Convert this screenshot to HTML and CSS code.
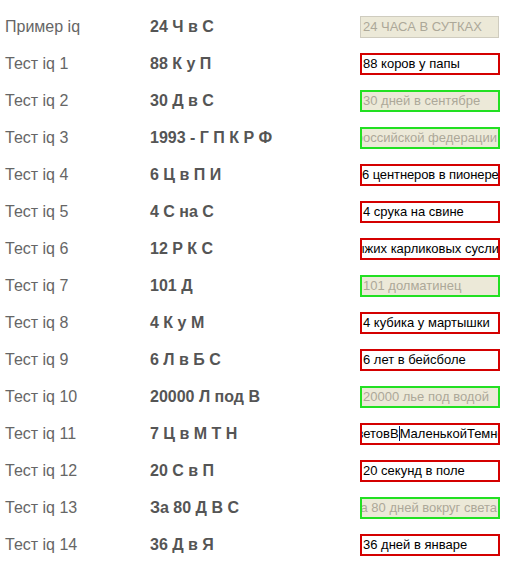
FILE: index.html
```html
<!DOCTYPE html>
<html lang="ru">
<head>
    <meta charset="UTF-8">
    <title>Тест iq</title>
    <link rel="stylesheet" href="styles.css">
</head>
<body>
    <div class="quiz">
        <div class="row">
            <span class="name">Пример iq</span>
            <span class="code">24 Ч в С</span>
            <div class="field sample">24 ЧАСА В СУТКАХ</div>
        </div>
        <div class="row">
            <span class="name">Тест iq 1</span>
            <span class="code">88 К у П</span>
            <div class="field bad">88 коров у папы</div>
        </div>
        <div class="row">
            <span class="name">Тест iq 2</span>
            <span class="code">30 Д в С</span>
            <div class="field ok">30 дней в сентябре</div>
        </div>
        <div class="row">
            <span class="name">Тест iq 3</span>
            <span class="code">1993 - Г П К Р Ф</span>
            <div class="field ok end"><span>российской федерации</span></div>
        </div>
        <div class="row">
            <span class="name">Тест iq 4</span>
            <span class="code">6 Ц в П И</span>
            <div class="field bad tight">6 центнеров в пионере</div>
        </div>
        <div class="row">
            <span class="name">Тест iq 5</span>
            <span class="code">4 С на С</span>
            <div class="field bad">4 срука на свине</div>
        </div>
        <div class="row">
            <span class="name">Тест iq 6</span>
            <span class="code">12 Р К С</span>
            <div class="field bad"><span class="shift-ry">рыжих карликовых сусликов</span></div>
        </div>
        <div class="row">
            <span class="name">Тест iq 7</span>
            <span class="code">101 Д</span>
            <div class="field ok">101 долматинец</div>
        </div>
        <div class="row">
            <span class="name">Тест iq 8</span>
            <span class="code">4 К у М</span>
            <div class="field bad">4 кубика у мартышки</div>
        </div>
        <div class="row">
            <span class="name">Тест iq 9</span>
            <span class="code">6 Л в Б С</span>
            <div class="field bad">6 лет в бейсболе</div>
        </div>
        <div class="row">
            <span class="name">Тест iq 10</span>
            <span class="code">20000 Л под В</span>
            <div class="field ok">20000 лье под водой</div>
        </div>
        <div class="row">
            <span class="name">Тест iq 11</span>
            <span class="code">7 Ц в М Т Н</span>
            <div class="field bad"><span class="shift-cv">цветовВ<i class="caret"></i>МаленькойТемноте</span></div>
        </div>
        <div class="row">
            <span class="name">Тест iq 12</span>
            <span class="code">20 С в П</span>
            <div class="field bad">20 секунд в поле</div>
        </div>
        <div class="row">
            <span class="name">Тест iq 13</span>
            <span class="code">За 80 Д В С</span>
            <div class="field ok end"><span>За 80 дней вокруг света</span></div>
        </div>
        <div class="row">
            <span class="name">Тест iq 14</span>
            <span class="code">36 Д в Я</span>
            <div class="field bad">36 дней в январе</div>
        </div>
    </div>
</body>
</html>
```

FILE: styles.css
```css
body {
    margin: 0;
    background: #fff;
    font-family: "Liberation Sans", Arial, sans-serif;
}

.quiz {
    padding: 8px 0 0 5px;
}

.row {
    display: grid;
    grid-template-columns: 145px 210px 140px;
    align-items: center;
    height: 37px;
}

.name {
    font-size: 16px;
    color: #666;
}

.code {
    font-size: 16px;
    font-weight: bold;
    color: #555;
}

.field {
    box-sizing: border-box;
    height: 22px;
    padding: 0 1px;
    border: 2px solid #d40000;
    background: #fff;
    color: #000;
    font-size: 13px;
    line-height: 18px;
    white-space: nowrap;
    overflow: hidden;
}

.field.tight {
    padding: 0;
    letter-spacing: -0.1px;
}

.field.sample {
    width: 139px;
    border: 1px solid #cfccbf;
    padding: 0 2px;
    line-height: 20px;
    background: #ece9d8;
    color: #aca899;
}

.field.ok {
    border-color: #22e022;
    background: #ece9d8;
    color: #aca899;
}

.field.end {
    display: flex;
    justify-content: flex-end;
}

.shift-ry {
    margin-left: -15px;
}

.shift-cv {
    margin-left: -14px;
}

.caret {
    display: inline-block;
    width: 1px;
    height: 15px;
    vertical-align: -3px;
    background: #001a66;
}
```
